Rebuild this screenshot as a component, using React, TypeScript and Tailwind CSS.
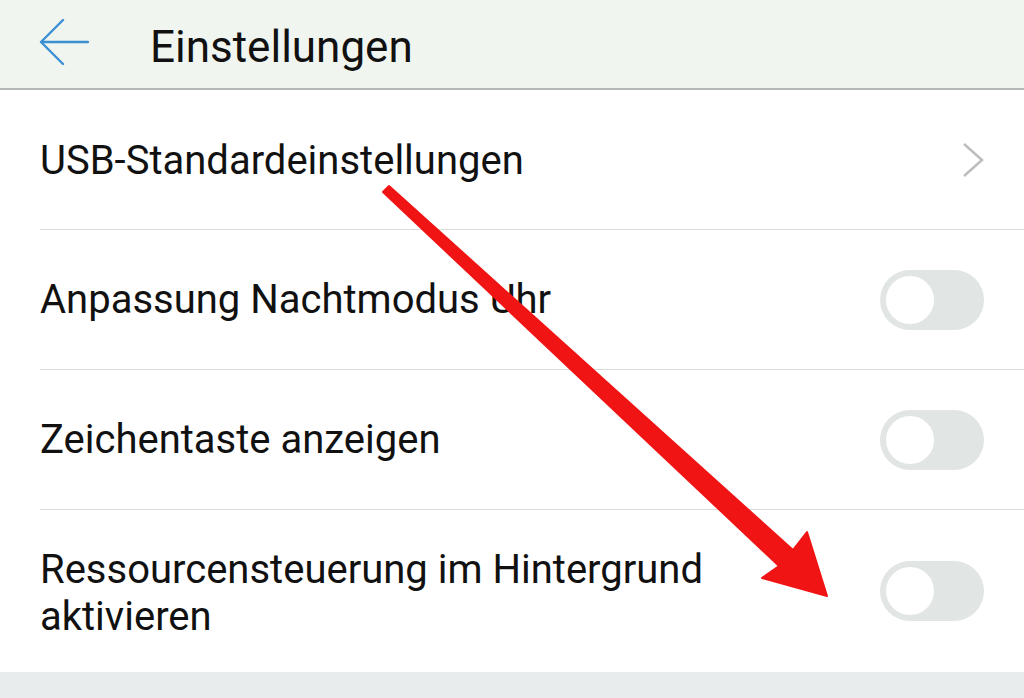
import React from "react";

function Toggle() {
  return (
    <div className="w-[104px] h-[60px] rounded-full bg-[#e1e6e4] flex items-center pl-[6px] shrink-0">
      <div className="w-[48px] h-[48px] rounded-full bg-white" />
    </div>
  );
}

export default function App() {
  return (
    <div
      className="relative w-[1024px] h-[698px] bg-white overflow-hidden flex flex-col"
      style={{ fontFamily: "Roboto, 'Noto Sans', sans-serif" }}
    >
      <div className="h-[90px] shrink-0 bg-[#f1f5f0] border-b-2 border-[#b4b8b4] flex items-center">
        <svg width="50" height="48" viewBox="0 0 50 48" className="ml-[39px] mt-[-4px]">
          <path d="M49 24H2M24 2L2 24L24 46" fill="none" stroke="#3b8fd3" strokeWidth="2.4" strokeLinecap="round" strokeLinejoin="round" />
        </svg>
        <div className="ml-[61px] text-[44px] text-[#111] leading-none mt-[6px]">Einstellungen</div>
      </div>
      <div className="flex-1 flex flex-col pl-[40px]">
        <div className="h-[140px] shrink-0 flex items-center justify-between border-b border-[#d9dcd9] pr-[40px]">
          <span className="text-[40px] text-[#111] mt-[2px]">USB-Standardeinstellungen</span>
          <svg width="22" height="36" viewBox="0 0 22 36">
            <path d="M2 2L20 18L2 34" fill="none" stroke="#bdbdbd" strokeWidth="2.5" />
          </svg>
        </div>
        <div className="h-[140px] shrink-0 flex items-center justify-between border-b border-[#d9dcd9] pr-[40px]">
          <span className="text-[40px] text-[#111]">Anpassung Nachtmodus Uhr</span>
          <Toggle />
        </div>
        <div className="h-[140px] shrink-0 flex items-center justify-between border-b border-[#d9dcd9] pr-[40px]">
          <span className="text-[40px] text-[#111]">Zeichentaste anzeigen</span>
          <Toggle />
        </div>
        <div className="flex-1 flex items-center justify-between pr-[40px]">
          <span className="text-[40px] text-[#111] leading-[47px] w-[700px] mt-[4px]">
            Ressourcensteuerung im Hintergrund aktivieren
          </span>
          <Toggle />
        </div>
      </div>
      <div className="h-[26px] shrink-0 bg-[#e8ecec]" />
      <svg className="absolute left-0 top-0 pointer-events-none" width="1024" height="698" viewBox="0 0 1024 698">
        <path
          d="M383 192 L389 186 L793 550 L807 532 L827 596 L762 578 L779 566 L383 192 Z"
          fill="#f01414"
          stroke="#f01414"
          strokeWidth="2"
          strokeLinejoin="round"
        />
      </svg>
    </div>
  );
}
